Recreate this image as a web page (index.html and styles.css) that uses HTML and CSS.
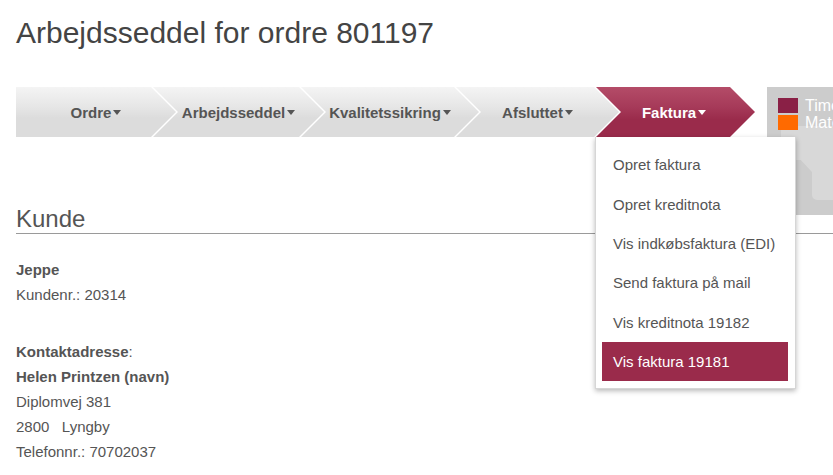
FILE: index.html
```html
<!DOCTYPE html>
<html lang="da">
<head>
<meta charset="utf-8">
<title>Arbejdsseddel for ordre 801197</title>
<link rel="stylesheet" href="styles.css">
</head>
<body>
<div class="page">
  <h1 class="title">Arbejdsseddel for ordre 801197</h1>

  <div class="navrow">
    <ul class="steps">
      <li class="step step--first step--ordre"><span class="step-shape">Ordre<i class="caret"></i></span></li>
      <li class="step step--arb"><span class="step-shape">Arbejdsseddel<i class="caret"></i></span></li>
      <li class="step step--kval"><span class="step-shape">Kvalitetssikring<i class="caret"></i></span></li>
      <li class="step step--afs"><span class="step-shape">Afsluttet<i class="caret"></i></span></li>
      <li class="step step--fak step--active">
        <span class="step-shape">Faktura<i class="caret"></i></span>
        <ul class="menu">
          <li class="menu-item">Opret faktura</li>
          <li class="menu-item">Opret kreditnota</li>
          <li class="menu-item">Vis indkøbsfaktura (EDI)</li>
          <li class="menu-item">Send faktura på mail</li>
          <li class="menu-item">Vis kreditnota 19182</li>
          <li class="menu-item menu-item--active">Vis faktura 19181</li>
        </ul>
      </li>
    </ul>

    <div class="legend">
      <svg class="legend-bg" width="80" height="128" viewBox="0 0 80 128">
        <g opacity="0.24" fill="#ffffff" stroke="#ffffff" stroke-width="10" stroke-linejoin="round">
          <path d="M19 44 L90 44 L90 108 L50 108 L50 83 L36 68 L19 68 Z"/>
        </g>
      </svg>
      <div class="legend-row"><span class="swatch swatch--timer"></span><span class="legend-label">Timer</span></div>
      <div class="legend-row"><span class="swatch swatch--mat"></span><span class="legend-label">Materialer</span></div>
    </div>
  </div>

  <h2 class="section-title">Kunde</h2>

  <div class="info">
    <div class="info-block">
      <div class="line strong">Jeppe</div>
      <div class="line">Kundenr.: 20314</div>
    </div>
    <div class="info-block info-block--gap">
      <div class="line"><b class="strong">Kontaktadresse</b>:</div>
      <div class="line strong">Helen Printzen (navn)</div>
      <div class="line">Diplomvej 381</div>
      <div class="line">2800&nbsp;&nbsp; Lyngby</div>
      <div class="line">Telefonnr.: 70702037</div>
    </div>
  </div>
</div>
</body>
</html>
```

FILE: styles.css
```css
html, body {
  margin: 0;
  padding: 0;
  background: #ffffff;
  overflow: hidden;
}

body {
  font-family: "Liberation Sans", Arial, sans-serif;
  color: #555555;
  font-size: 15px;
}

.page {
  padding-left: 16px;
}

.title {
  margin: 16px 0 37px;
  font-size: 30px;
  line-height: 34px;
  font-weight: normal;
  color: #444444;
}

.navrow {
  display: flex;
  align-items: flex-start;
  height: 50px;
  margin-bottom: 68px;
  position: relative;
}

.steps {
  display: flex;
  margin: 0;
  padding: 0;
  list-style: none;
  position: relative;
  z-index: 2;
}

.step {
  position: relative;
  margin-left: -23px;
}

.step--first {
  margin-left: 0;
}

.step-shape {
  display: flex;
  align-items: center;
  justify-content: center;
  box-sizing: border-box;
  height: 50px;
  padding: 0 25px;
  font-weight: bold;
  font-size: 15px;
  color: #555555;
  background: linear-gradient(to bottom, #f4f4f4 0%, #e6e6e6 40%, #dcdcdc 62%, #dcdcdc 100%);
  clip-path: polygon(0 0, calc(100% - 25px) 0, 100% 50%, calc(100% - 25px) 100%, 0 100%, 25px 50%);
}

.step--first .step-shape {
  clip-path: polygon(0 0, calc(100% - 25px) 0, 100% 50%, calc(100% - 25px) 100%, 0 100%);
}

.step--ordre .step-shape { width: 160px; }
.step--arb .step-shape { width: 171px; }
.step--kval .step-shape { width: 178px; }
.step--afs .step-shape { width: 163px; }
.step--fak .step-shape { width: 159px; padding-right: 28px; }

.step--active .step-shape {
  color: #ffffff;
  background: linear-gradient(to bottom, #b44c68 0%, #a63a59 40%, #9a2b4b 65%, #9a2b4b 100%);
}

.caret {
  display: inline-block;
  width: 0;
  height: 0;
  margin-left: 2px;
  border-left: 4.5px solid transparent;
  border-right: 4.5px solid transparent;
  border-top: 5px solid currentColor;
}

.menu {
  position: absolute;
  top: 100%;
  left: -1px;
  width: 201px;
  box-sizing: border-box;
  margin: 0;
  padding: 8px 7px 7px 6px;
  list-style: none;
  background: #ffffff;
  border: 1px solid #d6d6d6;
  border-top: none;
  box-shadow: 0 2px 5px rgba(0, 0, 0, 0.28);
}

.menu-item {
  display: flex;
  align-items: center;
  height: 39.4px;
  padding-left: 11px;
  font-size: 15px;
  color: #555555;
  white-space: nowrap;
}

.menu-item--active {
  background: #9a2b4b;
  color: #ffffff;
}

.legend {
  position: relative;
  z-index: 1;
  margin-left: 12px;
  flex: 1 0 auto;
  height: 128px;
  box-sizing: border-box;
  padding: 11px 0 0 11px;
  background: #cccccc;
  overflow: hidden;
}

.legend-bg {
  position: absolute;
  left: 0;
  top: 0;
}

.legend-row {
  position: relative;
  display: flex;
  align-items: center;
  height: 15px;
  margin-bottom: 2px;
  white-space: nowrap;
}

.swatch {
  width: 20px;
  height: 15px;
  margin-right: 7px;
}

.swatch--timer { background: #8a2046; }
.swatch--mat { background: #ff6a00; }

.legend-label {
  color: #ffffff;
  font-size: 16px;
  line-height: 15px;
}

.section-title {
  margin: 0;
  font-size: 24px;
  line-height: 28px;
  font-weight: normal;
  color: #555555;
  border-bottom: 1px solid #9a9a9a;
}

.info {
  margin-top: 23px;
}

.info-block--gap {
  margin-top: 32px;
}

.line {
  line-height: 25px;
  font-size: 15px;
}

.strong {
  font-weight: bold;
}
```
